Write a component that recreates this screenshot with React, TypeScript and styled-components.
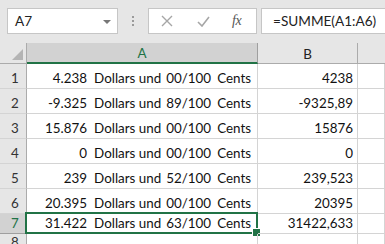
import React from "react";
import styled, { createGlobalStyle } from "styled-components";

const Global = createGlobalStyle`
  html, body { margin: 0; padding: 0; background: #ffffff; }
  body { width: 385px; height: 244px; overflow: hidden; font-family: "Lato", "Liberation Sans", sans-serif; }
  * { box-sizing: border-box; }
`;

const GREEN = "#217346";

const Page = styled.div`
  width: 385px;
  height: 244px;
  display: flex;
  flex-direction: column;
  background: #ffffff;
  overflow: hidden;
`;

const FormulaBar = styled.div`
  height: 43px;
  flex: none;
  background: #e6e6e6;
  display: flex;
  align-items: flex-start;
  padding: 8px 0 0 7px;
`;

const NameBox = styled.div`
  width: 111px;
  height: 26px;
  background: #fff;
  border: 1px solid #c6c6c6;
  display: flex;
  align-items: center;
  justify-content: space-between;
  padding: 0 6px 0 7px;
  font-size: 13.6px;
  color: #222;
`;

const Caret = styled.span`
  width: 0;
  height: 0;
  border-left: 4px solid transparent;
  border-right: 4px solid transparent;
  border-top: 4px solid #777;
  margin-top: 1px;
`;

const Grip = styled.div`
  width: 30px;
  height: 26px;
  display: flex;
  flex-direction: column;
  align-items: center;
  justify-content: center;
  gap: 2px;
  span {
    width: 2px;
    height: 2px;
    background: #9a9a9a;
  }
`;

const FuncBox = styled.div`
  width: 109px;
  height: 26px;
  background: #fff;
  border: 1px solid #c6c6c6;
  display: flex;
  align-items: center;
  padding: 0 0 0 12px;
`;

const IconSlot = styled.div<{ $w: number }>`
  width: ${(p) => p.$w}px;
  height: 24px;
  display: flex;
  align-items: center;
`;

const Fx = styled.span`
  font-family: "Liberation Serif", serif;
  font-style: italic;
  font-size: 14px;
  color: #555;
  letter-spacing: -0.5px;
`;

const FormulaInput = styled.div`
  flex: 1;
  height: 26px;
  margin-left: 4px;
  background: #fff;
  border: 1px solid #c6c6c6;
  border-right: none;
  display: flex;
  align-items: center;
  padding-left: 11px;
  font-size: 13.6px;
  color: #222;
`;

const Sheet = styled.div`
  flex: 1;
  display: grid;
  grid-template-columns: 27px 231px 100px 1fr;
  grid-template-rows: 21px repeat(6, 25px) 20px 1fr;
  background: #fff;
`;

const Corner = styled.div`
  background: #e6e6e6;
  border-right: 1px solid #ababab;
  border-bottom: 1px solid #ababab;
  position: relative;
  &::after {
    content: "";
    position: absolute;
    right: 3px;
    bottom: 3px;
    width: 0;
    height: 0;
    border-left: 11px solid transparent;
    border-bottom: 11px solid #b4b4b4;
  }
`;

const ColHead = styled.div<{ $sel?: boolean }>`
  background: ${(p) => (p.$sel ? "#d2d2d2" : "#e6e6e6")};
  border-right: 1px solid ${(p) => (p.$sel ? "#9f9f9f" : "#ababab")};
  border-bottom: ${(p) => (p.$sel ? `2px solid ${GREEN}` : "1px solid #ababab")};
  display: flex;
  align-items: center;
  justify-content: center;
  font-size: 13.4px;
  color: ${(p) => (p.$sel ? GREEN : "#222")};
  padding-top: 1px;
`;

const RowHead = styled.div<{ $sel?: boolean }>`
  background: ${(p) => (p.$sel ? "#d2d2d2" : "#e6e6e6")};
  border-right: ${(p) => (p.$sel ? `2px solid ${GREEN}` : "1px solid #ababab")};
  border-bottom: 1px solid ${(p) => (p.$sel ? "#9f9f9f" : "#d4d4d4")};
  display: flex;
  align-items: flex-end;
  padding: 0 0 2px 11px;
  font-size: 13.4px;
  color: ${(p) => (p.$sel ? GREEN : "#333")};
`;

const Cell = styled.div<{ $sel?: boolean }>`
  position: relative;
  border-right: 1px solid #d4d4d4;
  border-bottom: 1px solid #d4d4d4;
  display: flex;
  align-items: flex-end;
  justify-content: flex-end;
  padding: 0 4px 2px 0;
  font-size: 13.4px;
  color: #111;
  white-space: pre;
  ${(p) =>
    p.$sel &&
    `
    &::before {
      content: "";
      position: absolute;
      left: -2px;
      top: -2px;
      right: -1px;
      bottom: -1px;
      border: 2px solid ${GREEN};
      pointer-events: none;
    }
    &::after {
      content: "";
      position: absolute;
      right: -4px;
      bottom: -4px;
      width: 7px;
      height: 7px;
      background: ${GREEN};
      border: 1px solid #fff;
    }
  `}
`;

const TextCell = styled(Cell)`
  padding-right: 6px;
`;

const Part = styled.span<{ $gap: number }>`
  margin-left: ${(p) => p.$gap}px;
`;

const EmptyHead = styled.div`
  background: #e6e6e6;
  border-bottom: 1px solid #ababab;
`;

const rows = [
  { n: "4.238", c: "00", b: "4238" },
  { n: "-9.325", c: "89", b: "-9325,89" },
  { n: "15.876", c: "00", b: "15876" },
  { n: "0", c: "00", b: "0" },
  { n: "239", c: "52", b: "239,523" },
  { n: "20.395", c: "00", b: "20395" },
  { n: "31.422", c: "63", b: "31422,633" },
];

export default function App() {
  return (
    <>
      <Global />
      <Page>
        <FormulaBar>
          <NameBox>
            <span>A7</span>
            <Caret />
          </NameBox>
          <Grip>
            <span />
            <span />
            <span />
          </Grip>
          <FuncBox>
            <IconSlot $w={36}>
              <svg width="12" height="12" viewBox="0 0 12 12">
                <path d="M1 1 L11 11 M11 1 L1 11" stroke="#a6a6a6" strokeWidth="1.4" fill="none" />
              </svg>
            </IconSlot>
            <IconSlot $w={35}>
              <svg width="13" height="11" viewBox="0 0 13 11">
                <path d="M1 6 L5 10 L12 1" stroke="#a6a6a6" strokeWidth="1.6" fill="none" />
              </svg>
            </IconSlot>
            <IconSlot $w={20}>
              <Fx>fx</Fx>
            </IconSlot>
          </FuncBox>
          <FormulaInput>=SUMME(A1:A6)</FormulaInput>
        </FormulaBar>
        <Sheet>
          <Corner />
          <ColHead $sel>A</ColHead>
          <ColHead>B</ColHead>
          <EmptyHead />
          {rows.map((r, i) => {
            const sel = i === 6;
            return (
              <React.Fragment key={i}>
                <RowHead $sel={sel}>{i + 1}</RowHead>
                <TextCell $sel={sel}>
                  <span>{r.n}</span>
                  <Part $gap={7}>Dollars und</Part>
                  <Part $gap={5}>{r.c}/100</Part>
                  <Part $gap={6}>Cents</Part>
                </TextCell>
                <Cell>{r.b}</Cell>
                <Cell />
              </React.Fragment>
            );
          })}
          <RowHead>8</RowHead>
          <Cell />
          <Cell />
          <Cell />
        </Sheet>
      </Page>
    </>
  );
}
